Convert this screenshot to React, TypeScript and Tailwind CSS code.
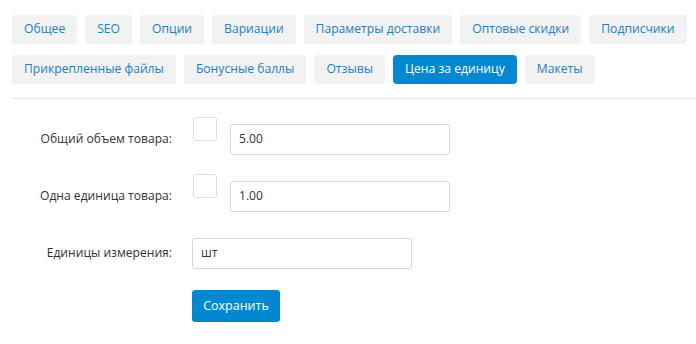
import React from "react";

const tabsRow1 = ["Общее", "SEO", "Опции", "Вариации", "Параметры доставки", "Оптовые скидки", "Подписчики"];
const tabsRow2 = ["Прикрепленные файлы", "Бонусные баллы", "Отзывы", "Цена за единицу", "Макеты"];

function Tab({ label, active }: { label: string; active?: boolean }) {
  return (
    <div
      className={
        "h-[29px] px-3 flex items-center whitespace-nowrap rounded-[4px] text-[12.15px] leading-none " +
        (active ? "bg-[#0288d1] text-white" : "bg-[#f2f2f2] text-[#1a80c4]")
      }
    >
      {label}
    </div>
  );
}

export default function App() {
  return (
    <div className="w-[696px] h-[344px] bg-white overflow-hidden" style={{ fontFamily: '"Open Sans", sans-serif' }}>
      <div className="pl-3 pt-[15px] flex flex-col gap-y-[11px]">
        <div className="flex gap-x-2">
          {tabsRow1.map((t) => (
            <Tab key={t} label={t} />
          ))}
        </div>
        <div className="flex gap-x-2">
          {tabsRow2.map((t) => (
            <Tab key={t} label={t} active={t === "Цена за единицу"} />
          ))}
        </div>
      </div>
      <div className="ml-3 mt-[14px] h-px bg-[#e3e8ed]" />

      <div className="mt-[18px] flex flex-col text-[12.1px] text-[#333]">
        <div className="flex items-start">
          <div className="w-[172px] mt-[7px] h-[31px] flex items-center justify-end whitespace-nowrap">Общий объем товара:</div>
          <div className="ml-[21px] w-6 h-6 border border-[#dcdfe3] rounded-[3px] bg-white" />
          <div className="ml-[13px] mt-[7px] w-[220px] h-[31px] border border-[#d3d8de] rounded-[3px] flex items-center px-2 text-[#333]">5.00</div>
        </div>
        <div className="flex items-start mt-[19px]">
          <div className="w-[172px] mt-[7px] h-[31px] flex items-center justify-end whitespace-nowrap">Одна единица товара:</div>
          <div className="ml-[21px] w-6 h-6 border border-[#dcdfe3] rounded-[3px] bg-white" />
          <div className="ml-[13px] mt-[7px] w-[220px] h-[31px] border border-[#d3d8de] rounded-[3px] flex items-center px-2 text-[#333]">1.00</div>
        </div>
        <div className="flex items-start mt-[26px]">
          <div className="w-[172px] h-[31px] flex items-center justify-end whitespace-nowrap">Единицы измерения:</div>
          <div className="ml-5 w-[220px] h-[31px] border border-[#d3d8de] rounded-[3px] flex items-center px-2 text-[#333]">шт</div>
        </div>
        <div className="mt-[21px] ml-[192px]">
          <button className="w-[88px] h-8 bg-[#0288d1] text-white rounded-[3px] text-[12.5px]">Сохранить</button>
        </div>
      </div>
    </div>
  );
}
